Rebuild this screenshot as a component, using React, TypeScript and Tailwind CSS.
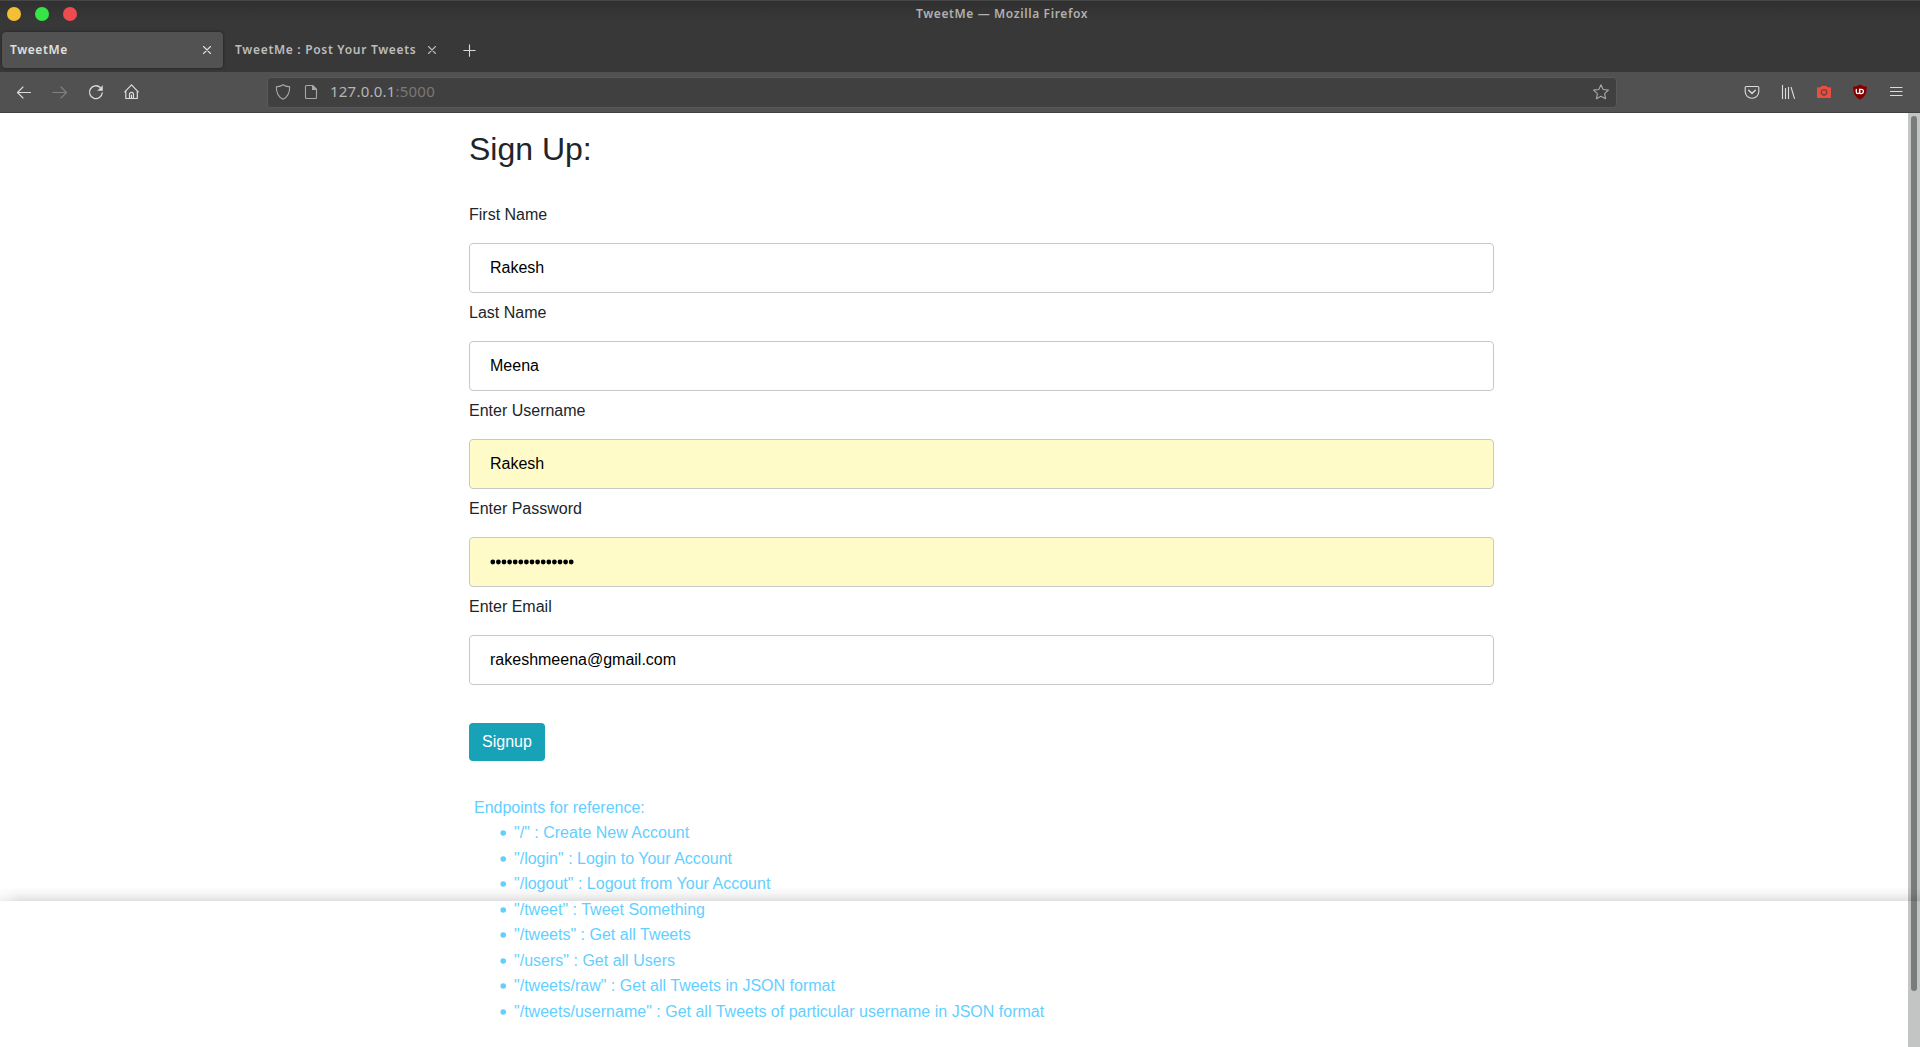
import React from "react";

const fields = [
  { label: "First Name", value: "Rakesh", filled: false },
  { label: "Last Name", value: "Meena", filled: false },
  { label: "Enter Username", value: "Rakesh", filled: true },
  { label: "Enter Password", value: "", filled: true },
  { label: "Enter Email", value: "rakeshmeena@gmail.com", filled: false },
];

const endpoints = [
  '"/" : Create New Account',
  '"/login" : Login to Your Account',
  '"/logout" : Logout from Your Account',
  '"/tweet" : Tweet Something',
  '"/tweets" : Get all Tweets',
  '"/users" : Get all Users',
  '"/tweets/raw" : Get all Tweets in JSON format',
  '"/tweets/username" : Get all Tweets of particular username in JSON format',
];

function Icon({ className = "", children }: { className?: string; children: React.ReactNode }) {
  return (
    <svg
      viewBox="0 0 16 16"
      className={"block size-4 shrink-0 " + className}
      fill="none"
      stroke="currentColor"
      strokeWidth="1.1"
      strokeLinecap="round"
      strokeLinejoin="round"
    >
      {children}
    </svg>
  );
}

const Close = ({ className = "" }: { className?: string }) => (
  <Icon className={className}>
    <path d="M4.5 4.5l7 7M11.5 4.5l-7 7" />
  </Icon>
);

function TitleBar() {
  return (
    <div className="grid h-7 grid-cols-[1fr_auto_1fr] items-center border-t border-[#464646]">
      <div className="flex gap-3.5 pl-[7px]">
        <span className="size-3.5 -translate-y-px rounded-full bg-[#f5bf35]" />
        <span className="size-3.5 -translate-y-px rounded-full bg-[#37e447]" />
        <span className="size-3.5 -translate-y-px rounded-full bg-[#ee4b50]" />
      </div>
      <div className="mb-0.5 ml-[84px] w-[172px] whitespace-nowrap text-[12px] font-semibold tracking-[0.62px] text-[#b0b0b0]">
        TweetMe — Mozilla Firefox
      </div>
      <div />
    </div>
  );
}

function Tabs() {
  return (
    <div className="flex h-11 items-start pl-0.5 pt-1 text-[12px] font-semibold">
      <div className="flex h-9 w-[221px] items-center justify-between rounded bg-[#525252] pl-2 pr-2 text-[#e0e0e0] shadow-[0_0_3px_rgba(0,0,0,0.5)]">
        <span className="tracking-[0.6px]">TweetMe</span>
        <Close />
      </div>
      <div className="flex h-9 items-center pl-3 text-[#bcbcbc]">
        <span className="w-[189px] whitespace-nowrap tracking-[0.7px]">TweetMe : Post Your Tweets</span>
        <Close />
      </div>
      <div className="flex h-9 items-center pl-[22px] pt-px text-[#d8d8d8]">
        <Icon>
          <path d="M7.5 1.800v11.400M1.800 7.500h11.400" />
        </Icon>
      </div>
    </div>
  );
}

function Toolbar() {
  return (
    <div className="flex h-[41px] items-center border-b border-[#404040] bg-[#515151] text-[#dcdcdc]">
      <div className="flex w-[267px] gap-5 pl-4">
        <Icon>
          <path d="M14.500 8.500H1.500M7 3L1.500 8.500 7 14" />
        </Icon>
        <Icon className="text-[#828282]">
          <path d="M1 8.500h13.500M9 3l5.500 5.500L9 14" />
        </Icon>
        <Icon>
          <path strokeWidth="1.3" d="M14.300 8.800a6.400 6.400 0 1 1-2-5.300" />
          <path d="M14.500 2v4.500H10z" fill="currentColor" strokeWidth=".5" />
        </Icon>
        <Icon>
          <path strokeWidth="1.2" d="M.8 7.800l6.700-7 6.700 7M1.800 6.900v7.600h11.500V6.900M5.500 14.300v-4a2 2 0 0 1 4 0v4M7.500 11v3.300" />
        </Icon>
      </div>
      <div className="flex h-[31px] w-[1350px] items-center rounded border border-[#595959] bg-[#404040] pl-[7px] text-[#a8a8a8]">
        <Icon>
          <path d="M8 .8c2 1.600 4.200 1.900 6.700 2.100C14.700 8.500 13.500 12.500 8 15.200 2.500 12.500 1.300 8.500 1.300 2.900 3.800 2.700 6 2.400 8 .8z" />
        </Icon>
        <Icon className="ml-3">
          <path d="M3.500 1.500h6l4 4v8a1 1 0 0 1-1 1h-9a1 1 0 0 1-1-1v-11a1 1 0 0 1 1-1z" />
          <path d="M9.500 1.500v4h4z" fill="currentColor" />
        </Icon>
        <div className="mb-0.5 ml-[11px] grow whitespace-nowrap text-[15px] leading-none tracking-[0.22px] text-[#b5b5b5]">
          127.0.0.1<span className="text-[#797979]">:5000</span>
        </div>
        <Icon className="mr-[7px]">
          <path d="M8 .8l2.200 4.700 5.200.6-3.800 3.500 1 5.200L8 12.300l-4.600 2.500 1-5.200L.6 6.100l5.200-.6z" />
        </Icon>
      </div>
      <div className="flex grow justify-end gap-5 pr-4">
        <Icon>
          <path d="M2.500 2.500h11a1.300 1.300 0 0 1 1.300 1.300V7.500a6.800 6.800 0 0 1-13.600 0V3.800a1.300 1.300 0 0 1 1.300-1.300z" />
          <path strokeWidth="1.400" d="M4.700 6.300L8 9.500l3.300-3.200" />
        </Icon>
        <Icon>
          <path strokeLinecap="butt" d="M2.500 1v14M5.500 4v11M8.500 3v12M11 3l3.600 11.800" />
        </Icon>
        <Icon>
          <path d="M2 3.300h2.500L5.700 1.700h4.600l1.200 1.600H14a1 1 0 0 1 1 1v8.800a1 1 0 0 1-1 1H2a1 1 0 0 1-1-1V4.300a1 1 0 0 1 1-1z" fill="#eb4e3e" stroke="none" />
          <circle cx="8" cy="8.300" r="2.700" stroke="#70423d" strokeWidth="1.400" />
        </Icon>
        <Icon>
          <path d="M8 .3c2 1.400 4.200 2 7 2.200 0 5.700-.8 10-7 13.200C1.800 12.500 1 8.200 1 2.500 3.800 2.300 6 1.700 8 .3z" fill="#800000" stroke="#a04040" strokeWidth=".3" />
          <path d="M4.300 5.300v2.600a1.600 1.600 0 0 0 3.300 0V5.300M7.800 9.600h1.500a2.100 2.100 0 0 0 0-4.200H7.800z" stroke="#fff" strokeWidth="1.300" />
        </Icon>
        <Icon>
          <path strokeWidth="1.200" d="M2.500 3.500h11.500M2.500 7.500h11.500M2.500 11.500h11.500" />
        </Icon>
      </div>
    </div>
  );
}

export default function App() {
  return (
    <div className="relative flex h-[1047px] w-[1920px] flex-col overflow-hidden bg-white">
      <header className="shrink-0 bg-[#383838] bg-linear-to-b from-[#303030] to-[#383838] to-[22px] font-['Noto_Sans',sans-serif]">
        <TitleBar />
        <Tabs />
        <Toolbar />
      </header>
      <div className="flex min-h-0 grow">
        <main className="grow pl-[469px] font-['Liberation_Sans',Arial,sans-serif] text-base text-[#212529]">
          <h1 className="mt-[17px] text-[32px] leading-[38px]">Sign Up:</h1>
          <form className="mt-[35px] w-[1025px]">
            {fields.map((f) => (
              <div key={f.label} className="h-[98px]">
                <div className="h-10 leading-6">{f.label}</div>
                <div
                  className={
                    "flex h-[50px] items-center rounded border border-[#c8c8c8] px-5 text-black " +
                    (f.filled ? "bg-[#fffbc8]" : "bg-white")
                  }
                >
                  {f.value || (
                    <svg viewBox="0 0 86 8" className="mb-px h-2 w-[86px]">
                      {Array.from({ length: 15 }, (_, i) => (
                        <circle key={i} cx={2.8 + i * 5.6} cy="4" r="2.4" />
                      ))}
                    </svg>
                  )}
                </div>
              </div>
            ))}
            <button type="button" className="mt-[30px] block h-[38px] w-[76px] rounded bg-[#17a2b8] text-white">
              Signup
            </button>
          </form>
          <section className="mt-[33.5px] pl-[5px] leading-[25.5px] text-[#64cfff]">
            <div>Endpoints for reference:</div>
            <ul className="pl-[26px]">
              {endpoints.map((e) => (
                <li key={e} className="flex items-center gap-2 tracking-[0.01px]">
                  <svg viewBox="0 0 6 6" className="mt-px size-1.5 shrink-0 fill-current">
                    <circle cx="3.200" cy="3" r="2.800" />
                  </svg>
                  <span>{e}</span>
                </li>
              ))}
            </ul>
          </section>
        </main>
        <div className="w-3 shrink-0 bg-[#c3c5c4] pl-[3px] pt-[3px]">
          <div className="h-[875px] w-1.5 rounded-full bg-[#787c7b]" />
        </div>
      </div>
      <div className="absolute inset-x-0 top-[887px] h-3.5 mask-l-from-[1900px] mask-l-to-[1935px] bg-linear-to-b from-black/0 via-black/4 to-black/12" />
    </div>
  );
}
